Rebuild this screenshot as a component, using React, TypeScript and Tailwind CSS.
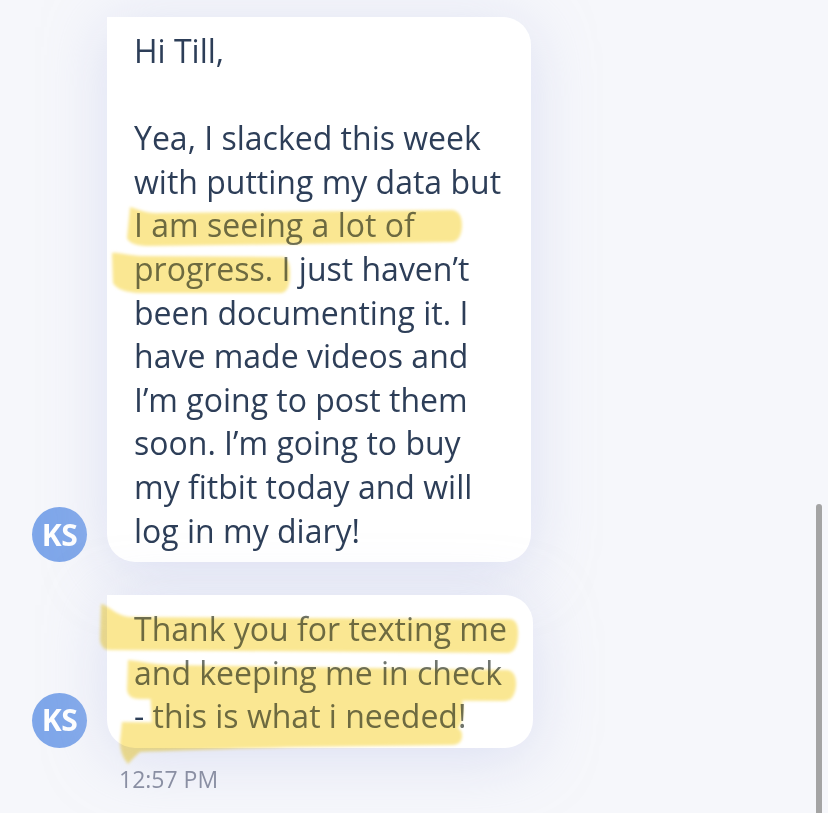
import React from "react";

const navy = "text-[#2d3e58]";

function Avatar() {
  return (
    <div className="w-[55px] h-[55px] shrink-0 rounded-full bg-[#7fa7ea] flex items-center justify-center text-white font-bold text-[30px] leading-none tracking-[-0.5px]">
      KS
    </div>
  );
}

function Line({ children }: { children?: React.ReactNode }) {
  return <div className="whitespace-nowrap h-[43.6px]">{children}</div>;
}

const HL = ({ children }: { children: React.ReactNode }) => (
  <span className="text-[#6f756f]">{children}</span>
);

export default function App() {
  return (
    <div
      className="relative w-full h-[813px] overflow-hidden bg-[#f6f7fb]"
      style={{ fontFamily: '"Open Sans", "Noto Sans", sans-serif' }}
    >
      <div className="pt-[17px] pl-[32px] flex flex-col">
        <div className="flex items-end gap-[20px]">
          <Avatar />
          <div
            className={`w-[424px] bg-white rounded-[28px] rounded-tl-none pl-[27px] pr-[20px] pt-[12px] pb-[10px] text-[32px] leading-[43.6px] ${navy} shadow-[0_10px_60px_rgba(196,202,236,0.5)]`}
          >
            <Line>Hi Till,</Line>
            <Line />
            <Line>Yea, I slacked this week</Line>
            <Line>with putting my data but</Line>
            <Line>
              <HL>I am seeing a lot of</HL>
            </Line>
            <Line>
              <HL>progress. I</HL> just haven’t
            </Line>
            <Line>been documenting it. I</Line>
            <Line>have made videos and</Line>
            <Line>I’m going to post them</Line>
            <Line>soon. I’m going to buy</Line>
            <Line>my fitbit today and will</Line>
            <Line>log in my diary!</Line>
          </div>
        </div>

        <div className="flex items-end gap-[20px] mt-[33px]">
          <Avatar />
          <div
            className={`w-[426px] bg-white rounded-[28px] rounded-tl-none pl-[27px] pr-[20px] pt-[12px] pb-[10px] text-[32px] leading-[43.6px] ${navy} shadow-[0_10px_60px_rgba(196,202,236,0.5)]`}
          >
            <Line>
              <HL>Thank you for texting me</HL>
            </Line>
            <Line>
              <HL>and keeping me in check</HL>
            </Line>
            <Line>
              - <HL>this is what i needed!</HL>
            </Line>
          </div>
        </div>

        <div className="ml-[87px] mt-[16px] text-[23px] leading-[30px] text-[#8a8fa3]">
          12:57 PM
        </div>
      </div>

      {/* highlighter marker strokes */}
      <svg
        className="absolute inset-0 pointer-events-none mix-blend-multiply"
        width="828"
        height="813"
        viewBox="0 0 828 813"
      >
        <defs>
          <filter id="soft" x="-10%" y="-50%" width="120%" height="200%">
            <feGaussianBlur stdDeviation="1.6" />
          </filter>
        </defs>
        <g fill="#fae792" filter="url(#soft)">
          <path d="M130,207 C138,209 146,214 162,213 L452,210 Q462,211 462,226 Q461,241 452,242 L150,246 Q130,246 127,238 Z" />
          <path d="M112,253 C118,252 124,255 140,256 L283,257 Q290,258 290,274 Q290,292 281,293 L140,293 Q118,292 113,283 Z" />
          <path d="M101,604 C110,606 116,616 130,617 L510,619 Q519,620 518,636 Q517,652 508,653 L110,650 Q101,650 100,640 Z" />
          <path d="M128,660 C140,661 150,664 170,665 L508,670 Q517,672 516,686 Q514,701 505,701 L140,699 Q128,699 127,690 Z" />
          <path d="M150,689 L455,693 Q464,695 463,712 Q462,729 453,730 L152,728 Z" />
          <path d="M122,722 L455,727 Q463,729 462,737 Q461,745 452,745 L300,747 Q180,750 140,752 Q133,758 128,764 Q120,755 120,742 Z" />
        </g>
      </svg>

      {/* scrollbar */}
      <div className="absolute right-[6px] top-[504px] bottom-0 w-[6px] rounded-t-full bg-[#a4a4a4]" />
    </div>
  );
}
